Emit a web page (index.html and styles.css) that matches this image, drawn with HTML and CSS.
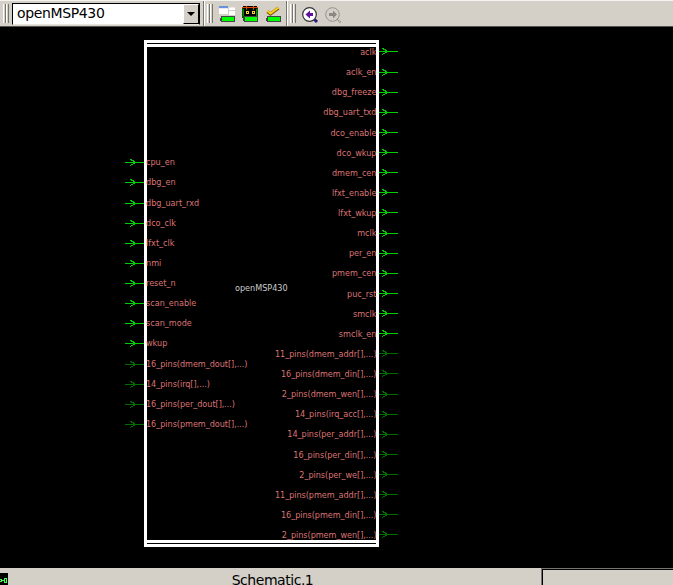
FILE: index.html
```
<!DOCTYPE html>
<html lang="en">
<head>
<meta charset="utf-8">
<title>Schematic</title>
<link rel="stylesheet" href="styles.css">
</head>
<body>
<div class="app">
<header class="toolbar">
  <div class="group first">
    <i class="grip"></i>
    <div class="combo"><span>openMSP430</span><button class="drop"><svg width="8" height="4"><path d="M0 0h8L4 4z"/></svg></button></div>
  </div>
  <div class="group views">
    <i class="grip"></i>
    <svg width="16" height="16" shape-rendering="crispEdges"><path fill="#fff" d="M0 0h9v8H0zM10 1h6v3h-6zM10 5h6v4h-6z"/><path fill="#6b93dc" d="M0 0h9v2H0z"/><path fill="#e8e8e8" d="M0 2h9v1H0zM10 1h6v1h-6z"/><path fill="#444" d="M2 10h14v6H2zM1 12h1v3H1z"/><path fill="#0f0" d="M3 11h12v4H3z"/></svg>
    <svg width="16" height="16" shape-rendering="crispEdges"><path fill="#075c07" d="M0 2h16v10H0z"/><path fill="#000" d="M1 0h14v10H1z"/><path fill="#e04a00" d="M0 1h16v1H0zM4 0h1v3H4zM11 0h1v3h-1z"/><path fill="#0a8a0a" d="M1 3h1v7H1zM14 3h1v7h-1zM4 3h1v1H4zM11 3h1v1h-1z"/><path fill="#ffd42a" d="M4 5h3v3H4zM10 5h3v3h-3z"/><path fill="#000" d="M5 6h1v1H5zM11 6h1v1h-1z"/><path fill="#444" d="M2 10h14v6H2zM1 12h1v3H1z"/><path fill="#0f0" d="M3 11h12v4H3z"/></svg>
    <svg width="16" height="16"><path fill="none" stroke="#765600" stroke-width="3.2" d="M2.500 5.500l3 2.500L13.500 2"/><path fill="none" stroke="#ffd018" stroke-width="2" d="M2.500 5l3 2.500L13.500 1.500"/><g shape-rendering="crispEdges"><path fill="#444" d="M2 10h14v6H2zM1 12h1v3H1z"/><path fill="#0f0" d="M3 11h12v4H3z"/></g></svg>
  </div>
  <div class="group nav">
    <i class="grip"></i>
    <svg width="17" height="17"><path stroke="#2a1a80" stroke-width="3" d="M12 12l3 3"/><circle cx="7.5" cy="7.5" r="6.8" fill="#fff" stroke="#333" stroke-width="1.2"/><path fill="#60109a" d="M3.500 7.500L8 3.500V6h3v3H8v2.500z"/></svg>
    <svg width="17" height="17"><path stroke="#8b8883" stroke-width="2" stroke-dasharray="1 1" d="M12 12l3.500 3.500"/><circle cx="7.500" cy="7.500" r="6.800" fill="none" stroke="#96928c"/><path fill="#8b8883" d="M12 7.500L8 3.500V6H4v3h4v2.500z"/></svg>
  </div>
</header>
<main class="canvas">
  <ul class="wires in">
    <li></li><li></li><li></li><li></li><li></li><li></li><li></li><li></li><li></li><li></li><li class="bus"></li><li class="bus"></li><li class="bus"></li><li class="bus"></li>
  </ul>
  <section class="block">
    <ul class="pins in"><li>cpu_en</li><li>dbg_en</li><li>dbg_uart_rxd</li><li>dco_clk</li><li>lfxt_clk</li><li>nmi</li><li>reset_n</li><li>scan_enable</li><li>scan_mode</li><li>wkup</li><li class="bus">16_pins(dmem_dout[],...)</li><li class="bus">14_pins(irq[],...)</li><li class="bus">16_pins(per_dout[],...)</li><li class="bus">16_pins(pmem_dout[],...)</li></ul>
    <h1>openMSP430</h1>
    <ul class="pins out"><li>aclk</li><li>aclk_en</li><li>dbg_freeze</li><li>dbg_uart_txd</li><li>dco_enable</li><li>dco_wkup</li><li>dmem_cen</li><li>lfxt_enable</li><li>lfxt_wkup</li><li>mclk</li><li>per_en</li><li>pmem_cen</li><li>puc_rst</li><li>smclk</li><li>smclk_en</li><li class="bus">11_pins(dmem_addr[],...)</li><li class="bus">16_pins(dmem_din[],...)</li><li class="bus">2_pins(dmem_wen[],...)</li><li class="bus">14_pins(irq_acc[],...)</li><li class="bus">14_pins(per_addr[],...)</li><li class="bus">16_pins(per_din[],...)</li><li class="bus">2_pins(per_we[],...)</li><li class="bus">11_pins(pmem_addr[],...)</li><li class="bus">16_pins(pmem_din[],...)</li><li class="bus">2_pins(pmem_wen[],...)</li></ul>
  </section>
  <ul class="wires out">
    <li></li><li></li><li></li><li></li><li></li><li></li><li></li><li></li><li></li><li></li><li></li><li></li><li></li><li></li><li></li><li class="bus"></li><li class="bus"></li><li class="bus"></li><li class="bus"></li><li class="bus"></li><li class="bus"></li><li class="bus"></li><li class="bus"></li><li class="bus"></li><li class="bus"></li>
  </ul>
</main>
<footer class="status">
  <svg class="mark" width="8" height="12" shape-rendering="crispEdges"><path d="M0 0h8v12H0z"/><path fill="none" stroke="#4f5" d="M0 6.500h1.500v2H0M2 7.500h2M4.500 5.500h2v4h-2z"/></svg>
  <div class="tab">Schematic.1</div>
  <div class="well"></div>
</footer>
</div>
<script src="wires.js"></script>
</body>
</html>
```
FILE: wires.js
```
// Draws a directional wire in every pin slot; the head sits nearer the block on outputs.
document.querySelectorAll('.wires').forEach(function (list) {
  var x = list.classList.contains('out') ? 3 : 5;
  list.querySelectorAll('li').forEach(function (slot) {
    slot.innerHTML = '<svg width="19" height="9"><rect y="4" width="19" height="1"/>' +
      '<path transform="translate(' + x + ')" d="M0 1h2v1H0zM1 2h3v1H1zM3 3h2v1H3zM3 5h2v1H3zM1 6h2v1H1zM0 7h1v1H0z"/></svg>';
  });
});
```
FILE: styles.css
```
* { box-sizing: border-box; }
body { margin: 0; background: #000; font-family: "DejaVu Sans", sans-serif; overflow: hidden; }
ul { list-style: none; margin: 0; padding: 0; }
svg { display: block; flex: none; }
.app { width: 673px; height: 585px; display: flex; flex-direction: column; }
.toolbar { height: 27px; flex: none; display: flex; background: #d4d0c8; border-top: 1px solid #f4f3f0; border-bottom: 1px solid #55534f; }
.group { display: flex; height: 25px; border-right: 1px solid #77746e; }
.group + .group { border-left: 1px solid #fff; }
.first { width: 204px; padding: 2px 3px 0; }
.grip { width: 6px; height: 19px; margin-top: 1px; background: linear-gradient(90deg, #fff 1px, #d4d0c8 1px 2px, #77746e 2px 3px, #fff 3px 4px, #d4d0c8 4px 5px, #77746e 5px); flex: none; }
.combo { width: 188px; height: 22px; margin-left: 3px; display: flex; justify-content: space-between; background: #fff; border: 1px solid #000; border-bottom-color: #e6e3de; line-height: 20px; padding-left: 4px; }
.combo span { font-size: 14px; letter-spacing: -.36px; line-height: 18px; }
.drop { width: 16px; height: 20px; padding: 0; display: grid; place-items: center; background: #d4d0c8; border: 1px solid; border-color: #fff #000 #000 #fff; }
.views { width: 83px; padding: 4px 0 0 2px; }
.views .grip, .nav .grip { margin-top: -1px; }
.views svg { margin: 1px 0 0 7px; }
.views .grip + svg { margin-left: 6px; }
.nav { border-right: 0; padding: 4px 0 0 2px; }
.nav svg { margin: 2px 0 0 6px; }
.canvas { height: 541px; flex: none; display: flex; padding: 13px 0 0 125px; }
.wires { width: 19px; fill: #00cd00; }
.wires li, .pins li { height: 20.13px; }
.wires svg { shape-rendering: crispEdges; }
.wires .bus { fill: #006b00; }
.wires.in { padding-top: 118.300px; }
.wires.out { padding-top: 7.400px; }
.block { width: 235px; height: 507px; background: #000; border: 3px solid #fff; display: grid; grid-template-columns: 88px 53px 88px; box-shadow: inset 0 1px #000, inset 0 4px #fff, inset 0 -1px #000, inset 0 -4px #fff; }
.pins { font-family: "DejaVu Sans Condensed", "DejaVu Sans", sans-serif; font-stretch: condensed; font-size: 9px; line-height: 12px; color: #dc7474; white-space: nowrap; }
.pins .bus { letter-spacing: -.04px; }
.pins.in { padding-top: 113.300px; margin-left: -1px; }
.pins.out { padding-top: 3px; margin-right: -.500px; }
.pins.out li { display: flex; justify-content: flex-end; }
.block h1 { margin: 239px 0 0; font: 9px/12px "DejaVu Sans Condensed", "DejaVu Sans", sans-serif; font-stretch: condensed; color: #ccc; }
.status { height: 17px; flex: none; display: flex; background: #d4d0c8; overflow: hidden; }
.mark { margin-top: 5px; }
.tab { width: 533px; height: 17px; padding-right: 4px; text-align: center; font-size: 14px; letter-spacing: -.46px; line-height: 24px; }
.well { flex: 1; border: solid #77746e; border-width: 1px 0 0 1px; box-shadow: inset 1px 1px #000; }
```
